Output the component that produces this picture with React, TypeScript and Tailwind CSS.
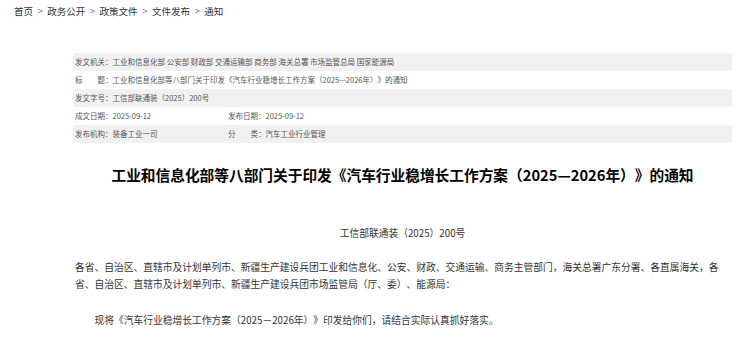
import React from "react";

const cjk = { fontFamily: '"Noto Sans CJK SC", "Liberation Sans", sans-serif' };

function Sep() {
  return <span className="mx-[4.5px] text-[#3f7bc9]">&gt;</span>;
}

function Row({ gray, children }: { gray?: boolean; children: React.ReactNode }) {
  return (
    <div className={`flex h-[18px] items-center pl-[2px] ${gray ? "bg-[#f1f1f1]" : ""}`}>
      {children}
    </div>
  );
}

export default function App() {
  return (
    <div className="h-[339px] w-[750px] overflow-hidden bg-white [text-spacing-trim:space-all]" style={cjk}>
      <div className="flex h-[20px] items-center pl-[14px] pt-[3px] text-[9.5px] text-[#333]">
        <span>首页</span>
        <Sep />
        <span>政务公开</span>
        <Sep />
        <span>政策文件</span>
        <Sep />
        <span>文件发布</span>
        <Sep />
        <span>通知</span>
      </div>

      <div className="ml-[73px] w-[659px]">
        <div className="mt-[33px] text-[7.5px] text-[#555]">
          <Row gray>
            <span>发文机关：</span>
            <span>工业和信息化部 公安部 财政部 交通运输部 商务部 海关总署 市场监管总局 国家能源局</span>
          </Row>
          <Row>
            <span>标　　题：</span>
            <span>工业和信息化部等八部门关于印发《汽车行业稳增长工作方案（2025—2026年）》的通知</span>
          </Row>
          <Row gray>
            <span>发文字号：</span>
            <span>工信部联通装（2025）200号</span>
          </Row>
          <Row>
            <div className="w-[153px]">成文日期：2025-09-12</div>
            <div>发布日期：2025-09-12</div>
          </Row>
          <Row gray>
            <div className="w-[153px]">发布机构：装备工业一司</div>
            <div>分　　类：汽车工业行业管理</div>
          </Row>
        </div>

        <h1 className="mt-[22px] text-center text-[14.7px] font-bold leading-[20px] text-black">
          工业和信息化部等八部门关于印发《汽车行业稳增长工作方案（2025—2026年）》的通知
        </h1>

        <div className="mt-[40px] text-center text-[9.75px] leading-[16px] text-[#333]">
          工信部联通装（2025）200号
        </div>

        <p className="mt-[18px] w-[652px] pl-[2px] text-[9.75px] leading-[17px] text-[#333]">
          各省、自治区、直辖市及计划单列市、新疆生产建设兵团工业和信息化、公安、财政、交通运输、商务主管部门，海关总署广东分署、各直属海关，各省、自治区、直辖市及计划单列市、新疆生产建设兵团市场监管局（厅、委）、能源局：
        </p>

        <p className="mt-[19px] pl-[21.5px] text-[9.75px] leading-[17px] text-[#333]">
          现将《汽车行业稳增长工作方案（2025－2026年）》印发给你们，请结合实际认真抓好落实。
        </p>
      </div>
    </div>
  );
}
